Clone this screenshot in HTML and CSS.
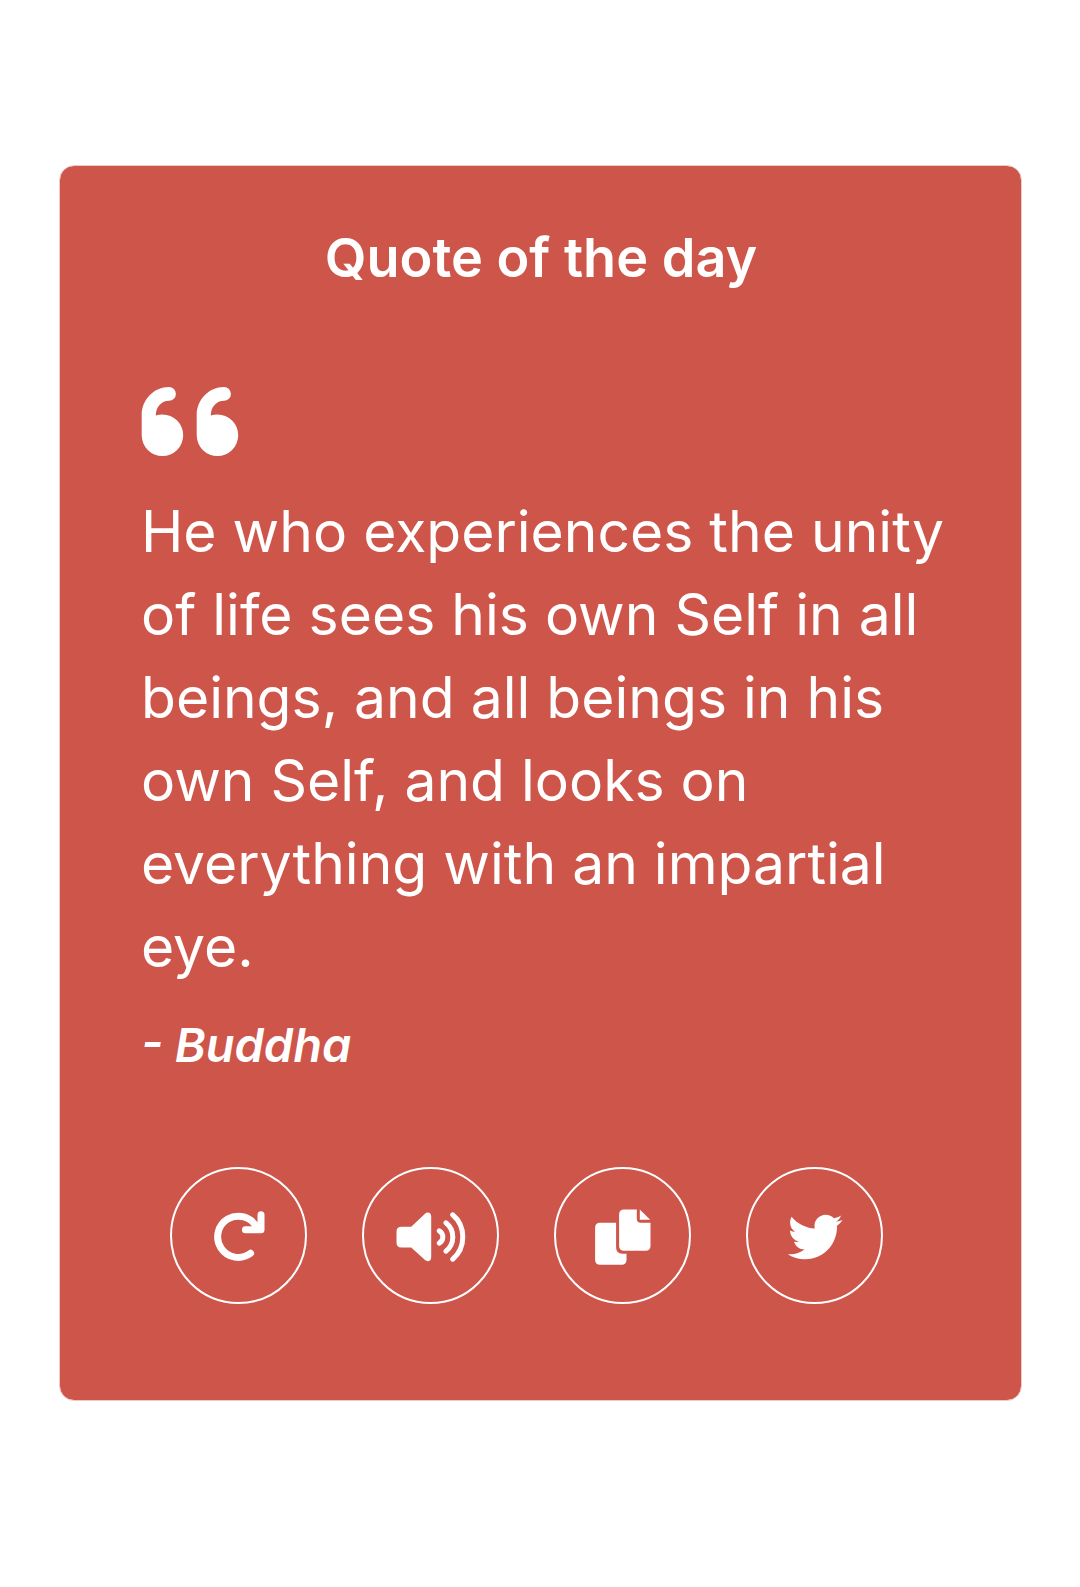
FILE: index.html
```html
<!DOCTYPE html>
<html lang="en">
<head>
<meta charset="utf-8">
<meta name="viewport" content="width=device-width, initial-scale=1">
<title>Quote of the day</title>
<link rel="stylesheet" href="styles.css">
</head>
<body>
<main class="card">
  <h1 class="title">Quote of the day</h1>
  <figure class="quote">
    <svg class="quote-mark" viewBox="0 0 98 70" aria-hidden="true">
      <path id="mark" d="M28 0a6.9 6.9 0 0 1 0 13.8C20.5 13.8 14.8 20 14.8 28.6Q18 27.4 21.4 27.4A20.7 20.7 0 0 1 21.4 69A20.7 20.7 0 0 1 .7 48.3V28C.7 12.5 13 0 28 0z"/>
      <use href="#mark" x="55"/>
    </svg>
    <blockquote class="text">He who experiences the unity of life sees his own Self in all beings, and all beings in his own Self, and looks on everything with an impartial eye.</blockquote>
    <figcaption class="author">- Buddha</figcaption>
  </figure>
  <div class="actions">
    <button class="action" type="button" aria-label="New quote">
      <svg class="icon" viewBox="0 0 70 60" aria-hidden="true">
        <g class="stroke wide">
          <path d="M46.6 47.3A20.6 20.6 0 1 1 52.5 21.2"/>
          <path d="M57 8.7V23.7H41.4"/>
        </g>
        <path d="M49 21l6-6 3 8z"/>
      </svg>
    </button>
    <button class="action" type="button" aria-label="Listen">
      <svg class="icon" viewBox="0 0 70 60" aria-hidden="true">
        <path d="M5.5 20.7H15.2L29 7.8C31.6 5.4 35.2 6.8 35.2 10.3V51.4C35.2 55 31.6 56.3 29 54L15.2 41.4H5.5Q.5 41.4 .5 36.4V25.7Q.5 20.7 5.5 20.7z"/>
        <g class="stroke">
          <path d="M43.3 24.8Q46.8 27 46.8 31T43.3 37.2"/>
          <path d="M49.9 16.8C59.1 24 59.1 38 49.9 45.2"/>
          <path d="M56.6 8.8C70.2 20 70.2 42 56.6 53.2"/>
        </g>
      </svg>
    </button>
    <button class="action" type="button" aria-label="Copy">
      <svg class="icon" viewBox="0 0 70 60" aria-hidden="true">
        <path d="M12.1 16.7H28.1V41.2Q28.1 47.7 34.5 47.7H38.5V53.7Q38.5 58.7 33.5 58.7H12.1Q7.1 58.7 7.1 53.7V21.7Q7.1 16.7 12.1 16.7z"/>
        <path d="M36.1 3.4H48.8V12.7Q48.8 16.7 52.8 16.7H62.5V39.7Q62.5 44.7 57.5 44.7H36.1Q31.1 44.7 31.1 39.7V8.4Q31.1 3.4 36.1 3.4z"/>
        <path d="M51.8 3.6L62.2 13.8H51.8z"/>
      </svg>
    </button>
    <button class="action" type="button" aria-label="Tweet">
      <svg class="icon" viewBox="0 0 70 60" aria-hidden="true">
        <path transform="translate(7.8 3.6) scale(.107)" d="M459.37 151.716c.325 4.548.325 9.097.325 13.645 0 138.72-105.583 298.558-298.558 298.558-59.452 0-114.68-17.219-161.137-47.106 8.447.974 16.568 1.299 25.34 1.299 49.055 0 94.213-16.568 130.274-44.832-46.132-.975-84.792-31.188-98.112-72.772 6.498.974 12.995 1.624 19.818 1.624 9.421 0 18.843-1.3 27.614-3.573-48.081-9.747-84.143-51.98-84.143-102.985v-1.299c13.969 7.797 30.214 12.67 47.431 13.319-28.264-18.843-46.781-51.005-46.781-87.391 0-19.492 5.197-37.36 14.294-52.954 51.655 63.675 129.3 105.258 216.365 109.807-1.624-7.797-2.599-15.918-2.599-24.04 0-57.828 46.782-104.934 104.934-104.934 30.213 0 57.502 12.67 76.67 33.137 23.715-4.548 46.456-13.32 66.599-25.34-7.798 24.366-24.366 44.833-46.132 57.827 21.117-2.273 41.584-8.122 60.426-16.243-14.292 20.791-32.161 39.308-52.628 54.253z"/>
      </svg>
    </button>
  </div>
</main>
</body>
</html>
```
FILE: styles.css
```css
* {
  box-sizing: border-box;
}

body {
  margin: 0;
  padding: 165px 58px 186px 59px;
  background: #fff;
  font-family: Inter, "Open Sans", sans-serif;
  color: #fff;
}

.card {
  padding: 50px 64px 96px 81px;
  border: 1px solid #ecc9c5;
  border-radius: 15px;
  background: #ce5549;
  background-clip: padding-box;
}

.title {
  margin: 0;
  padding-right: 16px;
  font-size: 54px;
  line-height: 83px;
  font-weight: 600;
  text-align: center;
}

.quote {
  margin: 88px 0 0;
}

.quote-mark {
  display: block;
  width: 98px;
  height: 70px;
  fill: currentColor;
}

.text {
  margin: 33px 0 0;
  font-size: 57px;
  line-height: 83px;
}

.author {
  margin-top: 24px;
  font-size: 47px;
  line-height: 66px;
  font-weight: 600;
  font-style: italic;
}

.actions {
  display: flex;
  gap: 55px;
  margin: 89px 0 0 29px;
}

.action {
  display: grid;
  place-items: center;
  width: 137px;
  height: 137px;
  padding: 0;
  border: 2px solid #fff;
  border-radius: 50%;
  background: none;
  color: inherit;
  cursor: pointer;
}

.icon {
  width: 70px;
  height: 60px;
  fill: currentColor;
}

.stroke {
  fill: none;
  stroke: currentColor;
  stroke-width: 5;
  stroke-linecap: round;
  stroke-linejoin: round;
}

.wide {
  stroke-width: 7;
}
```
